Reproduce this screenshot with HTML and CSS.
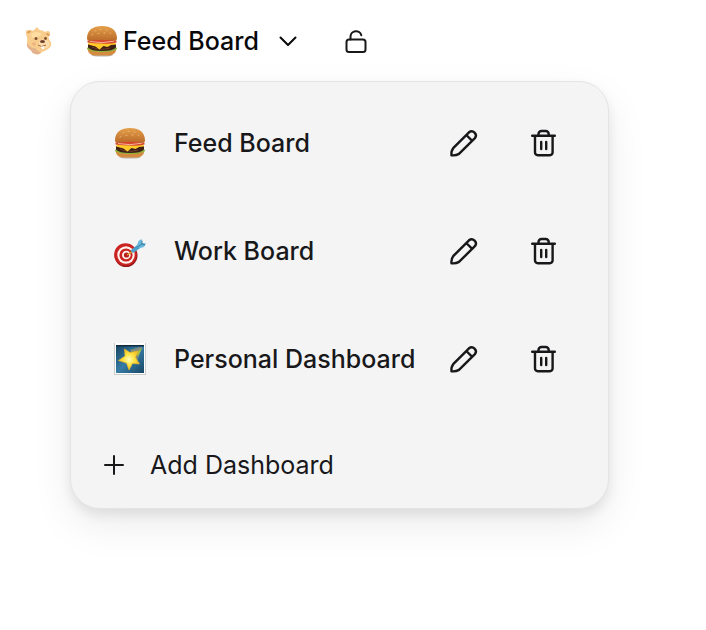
FILE: index.html
```
<!DOCTYPE html>
<html lang="en">
  <head>
    <meta charset="UTF-8" />
    <meta name="viewport" content="width=device-width, initial-scale=1.0" />
    <title>Feed Board</title>
    <link rel="stylesheet" href="styles.css">
  </head>
  <body>
    <!-- shared icons -->
    <svg class="sprite" aria-hidden="true">
      <defs>
        <linearGradient id="bun" x1="0" y1="0" x2="0" y2="1">
          <stop offset="0" stop-color="#e5a04c" />
          <stop offset="1" stop-color="#b96a28" />
        </linearGradient>
        <linearGradient id="night" x1="0" y1="0" x2="1" y2="1">
          <stop offset="0" stop-color="#17435f" />
          <stop offset="0.5" stop-color="#377ca6" />
          <stop offset="1" stop-color="#174764" />
        </linearGradient>
        <radialGradient id="star">
          <stop offset="0" stop-color="#fffbc0" />
          <stop offset="0.5" stop-color="#ffe545" />
          <stop offset="1" stop-color="#f5bd25" />
        </radialGradient>
      </defs>
      <symbol id="burger" viewBox="0 0 32 32">
        <ellipse cx="16" cy="30" rx="11" ry="1.6" fill="#b9b6b0" />
        <path d="M2 24h28c.5 4-3.500 6.500-8 6.500H10c-5 0-8.500-2.500-8-6.500z" fill="#d48a3f" />
        <path d="M1 23q3-2 6-.5 9 3 18 0 3-1.500 6 .5c0 3-3 2-5 3s-4 .5-6 .8-5 .6-8-.1-5 .3-7-1-4 0-4-2.700z" fill="#8db53c" />
        <path d="M2 19h28v3.500q-3 3.500-14 3.500T2 22.500z" fill="#3d2118" />
        <path d="M6 22q8 4 18 1" fill="none" stroke="#6d3c24" />
        <path d="M3 17l26-.5 1 3-5 .5-3.500 2-4-1-4 3.500-4-3-7.500-2z" fill="#ffc928" />
        <path d="M1.500 15.500q14-3 29 0v2q-8 2-15 1-7 0-14-1z" fill="#d4472c" />
        <path d="M4 16.500q12 2.500 24-.3" fill="none" stroke="#f4b29b" stroke-width="1" />
        <path d="M1 13.500C1 5 7 1 16 1s15 4 15 12.500c0 1.500-1 2-3 2.200-8-1.200-16-1.200-24 0-2-.2-3-.7-3-2.200z" fill="url(#bun)" />
        <path d="M9 6l1-.5M14 4.500h1M20 5l1 .4M24 8l.8.5M12 8.500l1-.2M18 8h1M6 10l.8-.5" stroke="#edb46a" stroke-linecap="round" />
      </symbol>
      <symbol id="dart" viewBox="0 0 32 32">
        <g transform="translate(0 4)">
          <circle cx="12" cy="16.500" r="11.500" fill="#8f1717" />
          <circle cx="11.500" cy="15.500" r="11.300" fill="#cb2321" />
          <circle cx="12" cy="16" r="8.700" fill="#fff3ec" />
          <circle cx="12" cy="16" r="6.600" fill="#cb2321" />
          <circle cx="12.300" cy="16" r="4.300" fill="#fff3ec" />
          <circle cx="12.500" cy="16" r="2.600" fill="#b81d1c" />
          <path d="M13 16l6-4" stroke="#d9a22c" stroke-width="1.500" />
          <path d="M16.500 11.500l7.500-6.200 3 3.200-8 5.500z" fill="#4ca0ca" />
          <path d="M23 6.500L24.500 2l3-2 .5 4 4 .5-2 3.500-5 1.300z" fill="#68b9de" />
          <path d="M23.500 8L28 5l3 .8M28 5V1.500" fill="none" stroke="#2b6c91" stroke-width="0.800" />
        </g>
      </symbol>
      <symbol id="picture" viewBox="0 0 32 32">
        <path d="M0 0h32v32H0z" fill="#cccdcd" />
        <path d="M1 0h30v31H1z" fill="#fff" />
        <path d="M2 2h28v28H2z" fill="url(#night)" />
        <path d="M2 2h28v1.500H2z" fill="#102c3d" />
        <path d="M16 7l10-3 2 1-5 13z" fill="#838c79" />
        <path d="M22 10l6-5-4 8z" fill="#a9c63a" />
        <path d="M10.500 6l5.500 3.500 8-1.500-2.500 6.500 4 6.500-7-.5L15 27l-2.500-7-8-2.500 6.500-4.500z" fill="url(#star)" stroke="#efb727" stroke-width="0.600" />
      </symbol>
      <symbol id="pencil" viewBox="0 0 32 32">
        <path d="M4.500 28.300q-.5-4.300 1.700-7.100L22 5.300a4.200 4.200 0 0 1 5.900 5.900L12 26.900q-3.200 1.900-7.500 1.400zM19.300 8l5.900 5.900" />
      </symbol>
      <symbol id="trash" viewBox="0 0 32 32">
        <path d="M5.200 8.700h22.600M8 8.700v16.800a2.700 2.700 0 0 0 2.700 2.700h12.200a2.700 2.700 0 0 0 2.700-2.700V8.700M11.500 8.700V7a3 3 0 0 1 3-3h4.200a3 3 0 0 1 3 3v1.700M14.200 15v7M19.200 15v7" />
      </symbol>
    </svg>

    <header class="topbar">
      <a class="logo" href="#" aria-label="Home">
        <svg viewBox="0 0 28 30">
          <path d="M2 8Q1 3.500 4.500 4q3-.5 4.500 1 2-2 4-4l2.500 3Q19 4 21 6q4-2 5 .5 .5 3-1.500 4.500 .5 3 2.500 5 1 5-3 7-3 2-6 3-2 3-6 2-4-.5-4.500-3.500-4.500-3.500-4.500-7.500Q4 12 2 8z" fill="#f7cc8c" />
          <path d="M3 17q4 6 8 5 3 4 6 4-2 4-7 1.500-2-.5-3-3-5-2.500-4-7.500z" fill="#e3b28d" />
          <path d="M7 8q5-4 11 0-4 4-10 4z" fill="#ffdda3" />
          <ellipse cx="20" cy="18" rx="5.500" ry="4.500" fill="#fcdcab" />
          <path d="M4 6.500l2-1M23 8l2 1" stroke="#d99858" stroke-width="1.600" stroke-linecap="round" />
          <circle cx="12" cy="12.500" r="1.500" fill="#805030" />
          <circle cx="21.500" cy="12.500" r="1.400" fill="#805030" />
          <ellipse cx="18.500" cy="15.500" rx="2.500" ry="1.600" fill="#70402d" />
          <path d="M14 19q3 3 8 0" fill="none" stroke="#a86643" />
          <path d="M17 20.500h3v2.500h-2z" fill="#fff" />
          <circle cx="10" cy="18" r="1.800" fill="#f0b080" />
        </svg>
      </a>

      <div class="switcher">
        <button class="switcher-toggle" type="button" aria-expanded="true" aria-controls="boards">
          <svg class="emoji"><use href="#burger" /></svg>
          <span>Feed Board</span>
          <svg class="chevron" viewBox="0 0 20 20"><path d="M2.500 6.500L10 14l7.500-7.500" /></svg>
        </button>

        <div class="menu" id="boards">
          <ul class="boards">
            <li class="board">
              <a class="board-link" href="#feed">
                <svg class="emoji"><use href="#burger" /></svg>
                <span>Feed Board</span>
              </a>
              <button class="icon-btn" type="button" aria-label="Edit Feed Board"><svg><use href="#pencil" /></svg></button>
              <button class="icon-btn" type="button" aria-label="Delete Feed Board"><svg><use href="#trash" /></svg></button>
            </li>
            <li class="board">
              <a class="board-link" href="#work">
                <svg class="emoji"><use href="#dart" /></svg>
                <span>Work Board</span>
              </a>
              <button class="icon-btn" type="button" aria-label="Edit Work Board"><svg><use href="#pencil" /></svg></button>
              <button class="icon-btn" type="button" aria-label="Delete Work Board"><svg><use href="#trash" /></svg></button>
            </li>
            <li class="board">
              <a class="board-link" href="#personal">
                <svg class="emoji"><use href="#picture" /></svg>
                <span>Personal Dashboard</span>
              </a>
              <button class="icon-btn" type="button" aria-label="Edit Personal Dashboard"><svg><use href="#pencil" /></svg></button>
              <button class="icon-btn" type="button" aria-label="Delete Personal Dashboard"><svg><use href="#trash" /></svg></button>
            </li>
          </ul>
          <button class="add" type="button">
            <svg viewBox="0 0 20 20"><path d="M1 10h18M10 1v18" /></svg>
            <span>Add Dashboard</span>
          </button>
        </div>
      </div>

      <button class="lock" type="button" aria-label="Unlock board">
        <svg viewBox="0 0 28 28">
          <rect x="4.500" y="12.500" width="19" height="12.500" rx="2.500" />
          <path d="M8.500 12.500V9.500a5.500 5.500 0 0 1 10.800-1.300" />
        </svg>
      </button>
    </header>
  </body>
</html>
```

FILE: styles.css
```
* {
  margin: 0;
  padding: 0;
  box-sizing: border-box;
}
body {
  min-height: 100vh;
  background-color: #fff;
  color: #18181b;
  font-family: "Inter", sans-serif;
  font-size: 25px;
  line-height: 32px;
}
button {
  border: none;
  background: none;
  color: inherit;
  font: inherit;
  cursor: pointer;
}
a {
  color: inherit;
  text-decoration: none;
}
svg {
  display: block;
  flex-shrink: 0;
}
.sprite {
  position: absolute;
  width: 0;
  height: 0;
}
.emoji {
  width: 32px;
  height: 32px;
}

/* top bar */
.topbar {
  display: flex;
  align-items: center;
  height: 82px;
  padding: 0 24px;
}
.logo svg {
  width: 28px;
  height: 30px;
}
.switcher {
  position: relative;
  margin-left: 34px;
}
.switcher-toggle {
  display: flex;
  align-items: center;
  color: #09090b;
  font-weight: 500;
}
.switcher-toggle span {
  margin: 0 19px 0 5px;
}
.chevron {
  width: 20px;
  height: 20px;
}
.chevron path,
.icon-btn svg,
.add path,
.lock svg {
  fill: none;
  stroke: currentColor;
  stroke-width: 2;
  stroke-linecap: round;
  stroke-linejoin: round;
}
.lock {
  margin-left: 44px;
}
.lock svg {
  width: 28px;
  height: 28px;
}

/* dropdown */
.menu {
  position: absolute;
  top: 56px;
  left: -16px;
  padding: 7px 8px;
  border: 1px solid #e4e4e7;
  border-radius: 30px;
  background-color: #f4f4f4;
  box-shadow: 0 16px 40px rgba(0, 0, 0, 0.08), 0 6px 12px rgba(0, 0, 0, 0.08);
  white-space: nowrap;
}
.boards {
  list-style: none;
}
.board {
  display: flex;
  align-items: center;
  gap: 16px;
  height: 108px;
  padding: 0 25px 0 35px;
}
.board-link {
  display: flex;
  flex: 1;
  align-items: center;
  gap: 28px;
  font-weight: 500;
}
.icon-btn {
  padding: 16px;
}
.icon-btn svg {
  width: 32px;
  height: 32px;
  stroke-width: 2.4;
}
.add {
  display: flex;
  align-items: center;
  gap: 26px;
  width: 100%;
  padding: 36px 25px 20px;
}
.add svg {
  width: 20px;
  height: 20px;
}
```
